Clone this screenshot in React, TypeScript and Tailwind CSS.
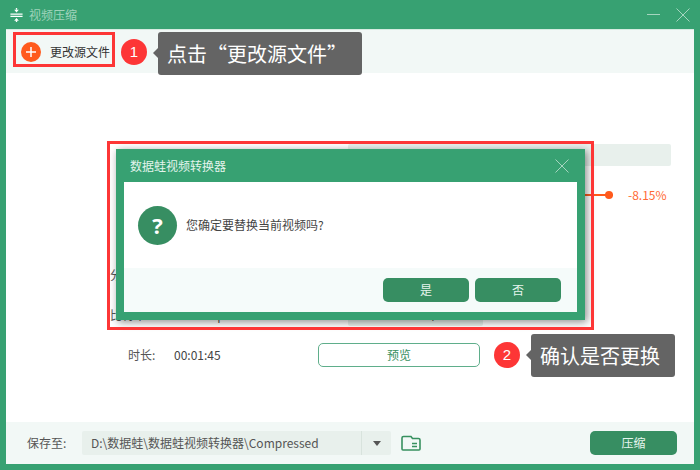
const FONT = "font-['Microsoft_YaHei','Noto_Sans_CJK_SC','Noto_Sans',sans-serif]";

function Badge({ n, className }: { n: number; className: string }) {
  return (
    <div className={`absolute w-[26px] h-[26px] rounded-full bg-[#fd3636] text-white text-[15px] font-['Liberation_Sans',sans-serif] flex items-center justify-center ${className}`}>
      {n}
    </div>
  );
}

function Callout({ text, className }: { text: string; className: string }) {
  return (
    <div className={`absolute h-[43px] rounded-[3px] bg-[#646464] text-white text-[20px] flex items-center pl-[9px] ${className}`}>
      <span className="absolute left-[-5px] top-[16px] w-0 h-0 border-y-[5px] border-y-transparent border-r-[5px] border-r-[#646464]" />
      {text}
    </div>
  );
}

export default function App() {
  return (
    <div className={`relative w-[700px] h-[470px] overflow-hidden bg-[#37a172] flex flex-col ${FONT}`}>
      {/* title bar */}
      <div className="h-[29px] flex items-center pl-[10px] pr-[10px] shrink-0">
        <svg width="13" height="14" viewBox="0 0 13 15" className="text-white">
          <path d="M0 6.5h13M0 9h13" stroke="currentColor" strokeWidth="1.4" />
          <path d="M4 1.8h5L6.5 4.8zM4 13.6h5L6.5 10.8z" fill="currentColor" />
          <path d="M6.5 0v2M6.5 13v2" stroke="currentColor" strokeWidth="1.4" />
        </svg>
        <span className="ml-[6px] text-[12px] text-[#9fd3bb]">视频压缩</span>
        <div className="ml-auto flex items-center gap-[16px]">
          <div className="w-[13px] h-px bg-[#a5d5bf]" />
          <svg width="14" height="14" viewBox="0 0 14 14">
            <path d="M.5.5l13 13M13.5.5l-13 13" stroke="#a5d5bf" strokeWidth="1" />
          </svg>
        </div>
      </div>

      {/* main panel */}
      <div className="mx-[6px] h-[435px] bg-white flex flex-col border-t border-[#d5ebe1]">
        <div className="h-[43px] bg-[#f2f8f6] flex items-center pl-[15px] shrink-0">
          <div className="w-[20px] h-[20px] rounded-full bg-[#ff5a1d] flex items-center justify-center">
            <svg width="10" height="10" viewBox="0 0 10 10">
              <path d="M5 0v10M0 5h10" stroke="#fff" strokeWidth="1.5" />
            </svg>
          </div>
          <span className="ml-[9px] text-[12px] text-[#333]">更改源文件</span>
        </div>

        <div className="flex-1 flex flex-col text-[12px] text-[#555] pl-[104px] pr-[23px]">
          <div className="mt-[71px] h-[22px] ml-[238px] rounded-[2px] bg-[#e8f0ec] shrink-0" />
          <div className="mt-[18px] h-[22px] flex items-center shrink-0">
            <div className="ml-[238px] flex-1 h-[2px] bg-[#ff5a1d] relative mr-[58px]">
              <div className="absolute right-0 top-[-3px] w-[8px] h-[8px] rounded-full bg-[#ff5a1d]" />
            </div>
            <span className="absolute left-[628px] text-[#ff6a35]">-8.15%</span>
          </div>
          <div className="mt-[59px] h-[20px] flex items-center shrink-0">分辨率:</div>
          <div className="mt-[19px] h-[22px] flex items-center shrink-0">
            <span className="w-[64px]">比特率:</span>
            <span className="w-[174px]">1352 kbps</span>
            <div className="w-[135px] h-[22px] rounded-[2px] bg-[#e8f0ec] pl-[40px]">1352 kbps</div>
          </div>
          <div className="mt-[17px] h-[24px] flex items-center shrink-0 pl-[18px]">
            <span className="w-[46px]">时长:</span>
            <span className="w-[144px] text-[#444]">00:01:45</span>
            <button className="w-[162px] h-[24px] rounded-[5px] border border-[#5fae8b] bg-white text-[#37905f] text-[12px]">预览</button>
          </div>
        </div>

        <div className="h-[42px] bg-[#f2f8f6] flex items-center pl-[21px] pr-[17px] shrink-0 text-[12px]">
          <span className="w-[55px] text-[#555]">保存至:</span>
          <div className="w-[309px] h-[24px] rounded-[2px] bg-[#e8f0ec] flex items-center text-[#555]">
            <span className="flex-1 pl-[9px]">D:\数据蛙\数据蛙视频转换器\Compressed</span>
            <div className="w-[30px] h-full border-l border-[#d8e3dd] flex items-center justify-center">
              <span className="w-0 h-0 border-x-[4px] border-x-transparent border-t-[5px] border-t-[#555]" />
            </div>
          </div>
          <svg width="20" height="16" viewBox="0 0 20 16" className="ml-[10px]" fill="none">
            <path d="M1 14V3c0-1 .5-1.5 1.5-1.5H10l1.5 2h6c1 0 1.5.5 1.5 1.5v9c0 .7-.5 1-1 1H2c-.6 0-1-.4-1-1z" stroke="#37905f" strokeWidth="1.6" />
            <path d="M11 8.5h5M11 11.5h5" stroke="#37905f" strokeWidth="1.6" />
          </svg>
          <button className="ml-auto w-[87px] h-[24px] rounded-[5px] bg-[#378e62] text-[#e6f5ee] text-[12px]">压缩</button>
        </div>
      </div>

      {/* dialog */}
      <div className="absolute left-[116px] top-[149px] w-[469px] h-[171px] bg-[#37a172] shadow-[2px_2px_8px_rgba(0,0,0,0.45)] flex flex-col">
        <div className="h-[33px] flex items-center justify-between pl-[14px] pr-[16px] shrink-0">
          <span className="text-[12px] text-[#e3f4ec]">数据蛙视频转换器</span>
          <svg width="14" height="14" viewBox="0 0 14 14">
            <path d="M.5.5l13 13M13.5.5l-13 13" stroke="#a5d5bf" strokeWidth="1" />
          </svg>
        </div>
        <div className="mx-[8px] h-[130px] bg-white flex flex-col">
          <div className="flex-1 flex items-center pl-[14px]">
            <div className="w-[39px] h-[39px] rounded-full bg-[#378e62] flex items-center justify-center text-white text-[22px] font-bold font-['Open_Sans',sans-serif]">?</div>
            <span className="ml-[9px] text-[12px] text-[#444]">您确定要替换当前视频吗?</span>
          </div>
          <div className="h-[44px] bg-[#f5fbfa] flex items-center justify-end gap-[6px] pr-[16px] shrink-0">
            <button className="w-[86px] h-[24px] rounded-[5px] bg-[#378e62] text-[#e6f5ee] text-[12px]">是</button>
            <button className="w-[86px] h-[24px] rounded-[5px] bg-[#378e62] text-[#e6f5ee] text-[12px]">否</button>
          </div>
        </div>
      </div>

      {/* annotations */}
      <div className="absolute left-[13px] top-[32px] w-[102px] h-[35px] border-[3px] border-[#fd3636]" />
      <div className="absolute left-[107px] top-[141px] w-[487px] h-[189px] border-[3px] border-[#fd3636]" />
      <Badge n={1} className="left-[121px] top-[39px]" />
      <Callout text="点击“更改源文件”" className="left-[158px] top-[32px] w-[204px]" />
      <Badge n={2} className="left-[494px] top-[342px]" />
      <Callout text="确认是否更换" className="left-[531px] top-[334px] w-[144px]" />
    </div>
  );
}
